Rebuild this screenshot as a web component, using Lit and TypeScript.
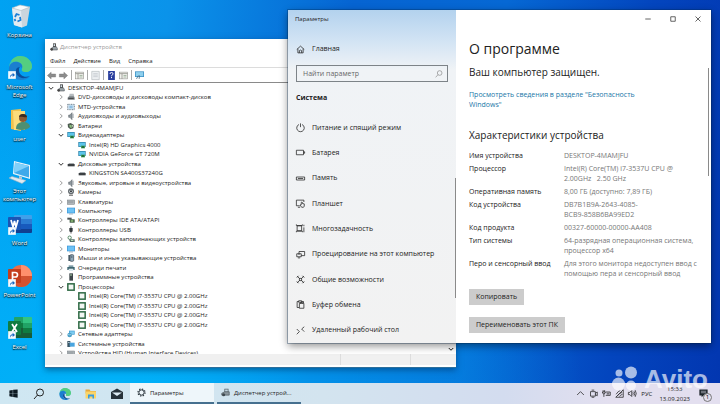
import { LitElement, html, svg, css, nothing, SVGTemplateResult } from "lit";
import { customElement } from "lit/decorators.js";

const glyphs: Record<string, SVGTemplateResult> = {
  // desktop
  bin: svg`<path d="M4 4l2 17 8 2.500 5-2L22 3z" fill="#c9d5dd"/><path d="M4 4l2 17 8 2.500L13 6z" fill="#e3ebf0"/><path d="M4 4l8-3 10 2-9 3.500z" fill="#f7fafb" stroke="#a9b7c0" stroke-width=".6"/><path d="M7 13l1.500-3 3 1m.5 2 .5 3-3 1.500m-2-.5-1-2" fill="none" stroke="#1c7fd6" stroke-width="1.800"/>`,
  edge: svg`<path d="M1 12C1 5 6 0 12 0c7 0 12 5 12 10 0 4-3 6-6 6-3 0-5-1-4-3 1-3-1-5-4-5-4 0-8 2-9 6z" fill="#37c3b5"/><path d="M12 0c7 0 12 5 12 10 0 4-3 6-6 6-3 0-5-1-4-3 2-4-2-9-9-7l-2-1c2-3 5-5 9-5z" fill="#5fd16f" opacity=".75"/><path d="M1 11c1-4 5-6 9-5 3 1 5 3 4 6-2-2-5-1-6 2-1 5 4 9 9 8 2 0 3-1 5-2-2 3-6 4-9 4C5 24 0 18 1 11z" fill="#1b7fd0"/><path d="M8 14c-1 5 4 9 9 8 2 0 3-1 5-2-5 2-11 0-11-6 0-1 0-2 1-3-2 0-4 1-4 3z" fill="#0c4f9c"/>`,
  user: svg`<path d="M3 2 13 1v22L3 21z" fill="#f0c14d"/><path d="M5 3h12v19H6z" fill="#fbdc7c"/><circle cx="15" cy="10" r="4" fill="#8a5a34"/><path d="M11 9c0-4 8-4 8 0-2 1-5-1-8 0z" fill="#3b2a20"/><path d="M8 21c0-5 3-7 7-7s7 2 7 5c-3 3-8 4-14 2z" fill="#4d8f72"/>`,
  pc: svg`<path d="M6 1l16 4v14L5 14z" fill="#e8f4fb"/><path d="M7 2.500l14 3.500v11.500L6 13z" fill="#3fa9ea"/><path d="M7 2.500l14 3.500L6 13z" fill="#7fd0fa"/><path d="M11 16l3 1v2h-3z" fill="#b9cad6"/><path d="M1 18l3-1.500 14 4-4 3z" fill="#dfeaf1" stroke="#9bb0be" stroke-width=".6"/>`,
  word: svg`<rect x="6" y="3" width="18" height="5" rx="1" fill="#3fa0ea"/><path d="M6 7h18v5H6z" fill="#2b7cd3"/><path d="M6 12h18v5H6z" fill="#185abd"/><path d="M6 17h18v3q0 1-1 1H7q-1 0-1-1z" fill="#103f91"/><rect y="5" width="13" height="13" rx="1" fill="#1a55b4"/><path d="M3 8l2 7 1.500-6L8 15l2-7" fill="none" stroke="#fff" stroke-width="1.700"/>`,
  ppt: svg`<circle cx="13" cy="12" r="11" fill="#ed6c47"/><path d="M13 1a11 11 0 0 1 11 11H13z" fill="#ff8f6b"/><path d="M2 12h22a11 11 0 0 1-22 0z" fill="#d35230"/><rect y="5" width="13" height="14" rx="1" fill="#c43e1c"/><path d="M4.500 16V8.500h2.500q2.500 0 2.500 2.300T7 13H5" fill="none" stroke="#fff" stroke-width="1.700"/>`,
  excel: svg`<path d="M6 2q0-1 1-1h8v6H6z" fill="#21a366"/><path d="M15 1h8q1 0 1 1v5h-9z" fill="#33c481"/><path d="M6 7h9v5H6z" fill="#107c41"/><path d="M15 7h9v5h-9z" fill="#21a366"/><path d="M6 12h18v10H7q-1 0-1-1z" fill="#185c37"/><path d="M15 12h9v5h-9z" fill="#107c41"/><rect y="5" width="13" height="14" rx="1" fill="#107c41"/><path d="M4 8l5 8m0-8-5 8" stroke="#fff" stroke-width="1.700"/>`,
  shortcut: svg`<rect x=".5" y=".5" width="23" height="23" fill="#f4f9fd"/><path d="M6 20q0-10 8-10V5l7 7-7 6v-5q-5 0-8 7z" fill="#1667c0"/>`,
  // device manager
  host: svg`<path d="M9 1h9v11H9z" fill="#555"/><path d="M4 16 9 11h10l3 5v5H4z" fill="#9aa3a8" stroke="#3c4347" stroke-width="1.500"/><path d="M11 4h4v5h-4z" fill="#d5e4ee"/><circle cx="5" cy="19" r="4" fill="#444"/>`,
  dvd: svg`<path d="M8 2h12l2 9H6z" fill="#b6bcc0"/><path d="M2 14 6 10h14l3 4v6H2z" fill="#777e82"/><path d="M4 16h16v2H4z" fill="#333"/>`,
  mtd: svg`<rect x="2" y="4" width="20" height="16" fill="#cfe4f4" stroke="#41525e" stroke-width="2" stroke-dasharray="3 2"/><path d="M7 8h10v8H7z" fill="#8fbfe2"/>`,
  audio: svg`<path d="M5 9h4l6-7v21l-6-7H5z" fill="#8d979d" stroke="#525b61" stroke-width="1.500"/><path d="M18 5v13" stroke="#5e6b73" stroke-width="2"/>`,
  battery: svg`<path d="M2 6l9-3 10 6-2 10-9 3-7-6z" fill="#4d5a50"/><path d="M7 8l7 2v9l-6-3z" fill="#8bc27f"/><path d="M14 8l6 3-3 5z" fill="#d7dfcf"/>`,
  display: svg`<rect x="1" y="3" width="22" height="15" fill="#2a7fa8"/><path d="M3 5h18v11H3z" fill="#5cc4ea"/><path d="M9 14h12v8H9z" fill="#3d9b57"/><path d="M12 16h6v4h-6z" fill="#1e5c37"/>`,
  disk: svg`<rect x="2" y="12" width="21" height="7" fill="#3b3f42"/><path d="M4 12l2-2h14l2 2z" fill="#8b9296"/>`,
  camera: svg`<circle cx="12" cy="10" r="9" fill="#62696d"/><circle cx="12" cy="10" r="5" fill="#d3d9dc"/><circle cx="12" cy="10" r="3" fill="#2e3336"/><path d="M6 20h12v3H6z" fill="#555"/>`,
  keyboard: svg`<rect x="1" y="6" width="22" height="13" fill="#b3babe" stroke="#71797e" stroke-width="1.500"/><path d="M4 10h16M4 14h16" stroke="#687075" stroke-width="1.500" stroke-dasharray="2 1"/>`,
  computer: svg`<rect x="0" y="2" width="24" height="17" fill="#3c96d8"/><path d="M2 4h20v13H2z" fill="#6cc2f5"/><path d="M6 20h12v2H6z" fill="#8499a6"/>`,
  ide: svg`<path d="M1 5h13v6H1z" fill="#4c5357"/><path d="M8 10h15v10H8z" fill="#35523a"/><path d="M11 13h8v4h-8z" fill="#9fd184"/>`,
  usb: svg`<path d="M9 1h6v5H9z" fill="#a5adb2"/><path d="M7 6h10v9q0 3-5 4-5-1-5-4z" fill="#33393d"/><path d="M12 18v5" stroke="#333" stroke-width="2"/>`,
  storage: svg`<circle cx="8" cy="8" r="5" fill="none" stroke="#3d7a50" stroke-width="2.500"/><path d="M6 13h17v8H9z" fill="#55706a"/><path d="M12 15h7v3h-7z" fill="#b7dcb9"/>`,
  mouse: svg`<rect x="4" y="3" width="8" height="18" fill="#52646f"/><rect x="9" y="2" width="11" height="20" rx="3" fill="#8fa9bb" stroke="#34414a" stroke-width="2"/><path d="M14.500 5v7" stroke="#34414a" stroke-width="2"/>`,
  printer: svg`<path d="M5 4h14v5H5z" fill="#7d9ba6"/><path d="M1 9h22v9h-4v-4H5v4H1z" fill="#3c6570"/><path d="M6 15h12v6H6z" fill="#dcebf0"/>`,
  software: svg`<rect x="7" y="1" width="11" height="22" fill="#3e464a"/><path d="M9 4h6v4H9z" fill="#87a78b"/>`,
  cpu: svg`<rect x="2.500" y="2.500" width="19" height="19" fill="#f2f7f3" stroke="#2f6a45" stroke-width="4.500"/>`,
  network: svg`<rect x="6" y="2" width="17" height="12" fill="#3c9bd2"/><path d="M8 4h13v8H8z" fill="#7ccbf0"/><circle cx="8" cy="15" r="7" fill="#4aa0c8"/><path d="M3 13q5 3 10 0" stroke="#d6f0fa" fill="none" stroke-width="1.500"/>`,
  system: svg`<path d="M1 3h9v18H1z" fill="#3c5665"/><path d="M8 8h15v12H8z" fill="#4aa5df"/><path d="M3 6h5v2H3z" fill="#cfe0ea"/>`,
  // toolbar
  back: svg`<path d="M1 12 11 3v5h12v8H11v5z" fill="#8c8c8c" stroke="#6e6e6e"/>`,
  forward: svg`<path d="M23 12 13 3v5H1v8h12v5z" fill="#8c8c8c" stroke="#6e6e6e"/>`,
  panel: svg`<rect x="1" y="3" width="22" height="18" fill="#f2f2ee" stroke="#8b8b85" stroke-width="1.500"/><path d="M1 7h22M8 7v14" stroke="#8b8b85" stroke-width="2"/><path d="M12 12h8m-8 4h8" stroke="#8ea58e" stroke-width="2"/>`,
  sheet: svg`<path d="M2 1h20v22H2z" fill="#eceff1" stroke="#a9b0b5" stroke-width="1.500"/><path d="M6 7h12M6 11h12M6 15h12" stroke="#b5bcc2" stroke-width="1.500"/>`,
  help: svg`<rect x="3" y="0" width="18" height="24" fill="#2b3f9e"/><path d="M8 8q0-4 4-4t4 3.500q0 2-2 3t-2 3.500m0 2v3" fill="none" stroke="#fff" stroke-width="2.500"/>`,
  scan: svg`<path d="M0 1h24v15H0z" fill="#3a8fc4"/><path d="M2 3h20v11H2z" fill="#8fd0ee"/><path d="M9 12l-5 9m8-9-1 9" stroke="#375f7a" stroke-width="2"/>`,
  // settings
  home: svg`<path d="M2 12 12 3l10 9M5 10v11h14V10M9 21v-6q3-3 6 0v6"/>`,
  search: svg`<circle cx="14" cy="9" r="7"/><path d="M9 14 2 22"/>`,
  power: svg`<path d="M8 4a10 10 0 1 0 8 0M12 1v10"/>`,
  cell: svg`<path d="M1 6h19v12H1zM20 10h3v4h-3"/>`,
  memory: svg`<path d="M1 8h22v8H1zM5 12h14"/>`,
  tablet: svg`<path d="M10 18H1V3h20v5M5 22h6M14 15V9q2-2 3 0v3l5 1v6l-2 3h-5l-4-6q1-2 3-1"/>`,
  tasks: svg`<path d="M3 5h12v13H3zM1 1v3m16-3v3M1 19v3m16-3v3M1 4h16M1 19h16M21 2v4m0 3v13"/>`,
  project: svg`<path d="M8 13V4h15v11h-9M2 10h12v8H2zM5 21h6"/>`,
  shared: svg`<path d="M3 3l7 7M21 3l-7 7M3 21l7-7M21 21l-7-7M2 7l5-5M22 7l-5-5M2 17l5 5M22 17l-5 5M9 9h6v6H9z"/>`,
  clipboard: svg`<path d="M8 20H3V4h4m8 0h5v4M7 2h8v4H7zM9 9h12v13H9zM12 9V7h6v2"/>`,
  remote: svg`<path d="M2 8l7 7-7 7M22 2l-7 6 7 7"/>`,
  // taskbar
  start: svg`<path d="M1 4l9-1.500V11H1zM11 2.300 23 1v10H11zM1 12h9v9L1 19.500zM11 12h12v11l-12-1.500z" fill="#0d1a22"/>`,
  explorer: svg`<path d="M1 3h8l2 3h11v5H1z" fill="#e8a83a"/><path d="M1 7h21v14H1z" fill="#fbd568"/><path d="M6 13h12v8h-3v-4H9v4H6z" fill="#3a9be0"/>`,
  mail: svg`<path d="M0 8 12 1l12 7v14H0z" fill="#26323a"/><path d="M2 9h20l-10 7z" fill="#dcebf3"/>`,
  gear: svg`<circle cx="12" cy="12" r="7" fill="none" stroke="#222c33" stroke-width="2.500"/><circle cx="12" cy="12" r="9.500" fill="none" stroke="#222c33" stroke-width="3" stroke-dasharray="3.700 3.760"/>`,
  manager: svg`<path d="M9 2h11v10H9z" fill="#59666e"/><path d="M11 4h7v6h-7z" fill="#c4d7e2"/><path d="M2 14l8-4h12v9H2z" fill="#8b979e" stroke="#39444a" stroke-width="1.500"/><circle cx="7" cy="18" r="4" fill="#3f494f"/>`,
  up: svg`<path d="M3 16l9-9 9 9"/>`,
  down: svg`<path d="M3 8l9 9 9-9"/>`,
  right: svg`<path d="M8 3l9 9-9 9"/>`,
  meet: svg`<path d="M4 7h13v12H4zM17 11l5-3v10l-5-3M7 3h7M7 22h7"/>`,
  charge: svg`<path d="M10 8h12v9H10M3 3v5m4-5v5M1 8h8q0 5-4 5t-4-5M5 13v8M14 10v5m4-5v5"/>`,
  wifi: svg`<path d="M2 22 22 2v20zM3 14Q8 6 14 4M7 18q4-7 12-9M12 20q2-4 8-6"/>`,
  volume: svg`<path d="M1 9h4l5-5v16l-5-5H1zM13 9q2 3 0 6M16 6q4 6 0 12M19 3q6 9 0 18"/>`,
  note: svg`<path d="M1 1h22v16H12l-5 5v-5H1z" fill="#1f262c"/><path d="M5 6h14M5 10h14" stroke="#dcdcec" stroke-width="1.500"/>`,
  min: svg`<path d="M1 12h22"/>`,
  max: svg`<path d="M3 3h18v18H3z"/>`,
  close: svg`<path d="M2 2l20 20M22 2 2 22"/>`,
};

const icon = (name: string, cls = "i8") =>
  html`<svg class="icon ${cls}" viewBox="0 0 24 24" aria-hidden="true">${glyphs[name]}</svg>`;

const shared = css`
  :host { box-sizing: border-box; font-family: "Open Sans", "Noto Sans", sans-serif; }
  *, *::before, *::after { box-sizing: border-box; }
  button, input { font: inherit; color: inherit; border: 0; padding: 0; background: none; margin: 0; }
  a { color: inherit; text-decoration: none; }
  ul { list-style: none; margin: 0; padding: 0; }
  h1, h2, h3, p { margin: 0; }
  .icon { display: block; flex: none; overflow: visible; }
  .i6 { width: 6px; height: 6px; }
  .i8 { width: 8px; height: 8px; }
  .i9 { width: 9px; height: 9px; }
  .i12 { width: 12px; height: 12px; }
  .i24 { width: 24px; height: 24px; }
  .line { fill: none; stroke: currentColor; stroke-width: 2; }
  .semi { stroke-width: 3; }
  .bold { stroke-width: 4; }
`;

type Node = { label: string; icon: string; level: 0 | 1 | 2; open?: boolean };
const n = (label: string, icon: string, level: 0 | 1 | 2 = 1, open = false): Node => ({ label, icon, level, open });
const core = "Intel(R) Core(TM) i7-3537U CPU @ 2.00GHz";
const tree: Node[] = [
  n("DESKTOP-4MAMJFU", "host", 0, true),
  n("DVD-дисководы и дисководы компакт-дисков", "dvd"),
  n("MTD-устройства", "mtd"),
  n("Аудиовходы и аудиовыходы", "audio"),
  n("Батареи", "battery"),
  n("Видеоадаптеры", "display", 1, true),
  n("Intel(R) HD Graphics 4000", "display", 2),
  n("NVIDIA GeForce GT 720M", "display", 2),
  n("Дисковые устройства", "disk", 1, true),
  n("KINGSTON SA400S37240G", "disk", 2),
  n("Звуковые, игровые и видеоустройства", "audio"),
  n("Камеры", "camera"),
  n("Клавиатуры", "keyboard"),
  n("Компьютер", "computer"),
  n("Контроллеры IDE ATA/ATAPI", "ide"),
  n("Контроллеры USB", "usb"),
  n("Контроллеры запоминающих устройств", "storage"),
  n("Мониторы", "computer"),
  n("Мыши и иные указывающие устройства", "mouse"),
  n("Очереди печати", "printer"),
  n("Программные устройства", "software"),
  n("Процессоры", "cpu", 1, true),
  n(core, "cpu", 2), n(core, "cpu", 2), n(core, "cpu", 2), n(core, "cpu", 2),
  n("Сетевые адаптеры", "network"),
  n("Системные устройства", "system"),
  n("Устройства HID (Human Interface Devices)", "keyboard"),
];

@customElement("device-manager")
export class DeviceManager extends LitElement {
  static styles = [shared, css`
    :host { display: flex; flex-direction: column; background: #fff; color: #1a1a1a; font-size: 6px; line-height: 8px; box-shadow: 0 2px 6px #00285080; border-bottom: 1px solid #2c6f9c; }
    .title { display: flex; align-items: center; gap: 2px; height: 16px; padding: 0 5px; color: #999; }
    .menu { display: flex; align-items: center; gap: 8px; height: 12px; padding: 0 5px; }
    .tools { display: flex; align-items: center; gap: 3px; height: 16px; padding: 0 2px; border-top: 1px solid #dcdcdc; border-bottom: 1px solid #8a8a8a; }
    .sep { width: 1px; height: 10px; background: #aaa; }
    .view { flex: 1; min-height: 0; display: flex; overflow: hidden; }
    .tree { flex: 1; display: grid; grid-auto-rows: 1fr; height: 275px; }
    .node { display: flex; align-items: center; gap: 3px; white-space: nowrap; padding-left: 3px; }
    .l1 { padding-left: 13px; }
    .l2 { padding-left: 33px; }
    .toggle { width: 6px; height: 6px; color: #333; }
    .closed { color: #999; }
    .bar { width: 11px; display: flex; align-items: flex-end; padding: 0 3px 2px; }
    .status { display: flex; height: 13px; background: #f0f0f0; border-bottom: 2px solid #fff; }
    .cell { width: 70px; border-left: 1px solid #ddd; }
    .cell.first { flex: 1; border: 0; }
    .cell.last { width: 46px; }
  `];

  render() {
    return html`
      <div class="title">${icon("host")}<span>Диспетчер устройств</span></div>
      <div class="menu">${["Файл", "Действие", "Вид", "Справка"].map((m) => html`<button>${m}</button>`)}</div>
      <div class="tools">
        ${["back", "forward", "|", "panel", "|", "sheet", "|", "help", "panel", "|", "scan"].map((t) =>
          t === "|" ? html`<span class="sep"></span>` : html`<button aria-label=${t}>${icon(t, "i9")}</button>`)}
      </div>
      <div class="view">
        <ul class="tree">
          ${tree.map((t) => html`<li class="node l${t.level}">
            ${t.level < 2
              ? html`<button class="toggle ${t.open ? "" : "closed"}" aria-label="toggle">${icon(t.open ? "down" : "right", "i6 line bold")}</button>`
              : nothing}
            ${icon(t.icon)}<span>${t.label}</span></li>`)}
        </ul>
        <div class="bar">${icon("down", "i6 line bold")}</div>
      </div>
      <div class="status"><span class="cell first"></span><span class="cell"></span><span class="cell last"></span></div>`;
  }
}

const sections: [string, string][] = [
  ["power", "Питание и спящий режим"],
  ["cell", "Батарея"],
  ["memory", "Память"],
  ["tablet", "Планшет"],
  ["tasks", "Многозадачность"],
  ["project", "Проецирование на этот компьютер"],
  ["shared", "Общие возможности"],
  ["clipboard", "Буфер обмена"],
  ["remote", "Удаленный рабочий стол"],
];

const specs: [string, string][] = [
  ["Имя устройства", "DESKTOP-4MAMJFU"],
  ["Процессор", "Intel(R) Core(TM) i7-3537U CPU @\n2.00GHz   2.50 GHz"],
  ["Оперативная память", "8,00 ГБ (доступно: 7,89 ГБ)"],
  ["Код устройства", "DB7B1B9A-2643-4085-\nBCB9-858B6BA99ED2"],
  ["Код продукта", "00327-60000-00000-AA408"],
  ["Тип системы", "64-разрядная операционная система,\nпроцессор x64"],
  ["Перо и сенсорный ввод", "Для этого монитора недоступен ввод с\nпомощью пера и сенсорный ввод"],
];

@customElement("settings-window")
export class SettingsWindow extends LitElement {
  static styles = [shared, css`
    :host { display: flex; background: #fff; color: #222; font-size: 7px; line-height: 10px; box-shadow: 0 3px 8px #00000070, 0 0 0 1px #00306050; }
    .side { position: relative; width: 168px; flex: none; display: flex; flex-direction: column; background: linear-gradient(#b3d2ee, #d3e4f4 32px, #f0f3f6 60px, #f2f2f2); }
    .title { font-size: 6px; line-height: 18px; padding: 0 7px; }
    .link { display: flex; align-items: center; gap: 7px; padding: 0 8px; white-space: nowrap; }
    .home { height: 20px; margin-top: 11px; }
    .search { display: flex; align-items: center; height: 17px; margin: 6px 8px 0; padding: 0 4px 0 6px; border: 1px solid #7d8388; }
    .search input { flex: 1; min-width: 0; outline: 0; }
    .search input::placeholder { color: #666; opacity: 1; }
    .search .icon { color: #888; }
    .group { font-size: 7px; font-weight: 700; padding: 11px 8px 12px; }
    .nav { flex: 1; display: grid; grid-auto-rows: 1fr; }
    .thumb { position: absolute; right: 0; width: 1px; background: #8a8a8a; }
    .side .thumb { top: 168px; bottom: 45px; }
    .main { position: relative; flex: 1; min-width: 0; padding: 0 8px 0 13px; }
    .main .thumb { right: 2px; top: 58px; height: 108px; }
    .caption { display: flex; justify-content: flex-end; gap: 19px; height: 18px; padding-right: 2px; align-items: center; color: #333; }
    h1 { font-size: 14px; font-weight: 400; line-height: 20px; margin-top: 11px; }
    .ok { font-size: 10px; font-weight: 500; line-height: 14px; margin-top: 6px; }
    .more { display: block; color: #1a77a8; margin-top: 11px; white-space: pre-line; }
    h2 { font-size: 10px; font-weight: 400; line-height: 14px; margin-top: 18px; }
    table { border-collapse: collapse; margin-top: 9px; }
    th, td { padding: 0 0 3px; text-align: left; vertical-align: top; font-weight: 400; white-space: pre; }
    th { width: 95px; }
    td { color: #777; }
    .btn { display: block; height: 16px; padding: 0 7px; background: #ccc; }
    .copy { margin: 7px 0 12px; }
  `];

  render() {
    return html`
      <nav class="side">
        <div class="title">Параметры</div>
        <a class="link home" href="#">${icon("home", "i9 line")}<span>Главная</span></a>
        <label class="search"><input type="text" placeholder="Найти параметр" aria-label="Найти параметр" />${icon("search", "i8 line")}</label>
        <h3 class="group">Система</h3>
        <div class="nav">
          ${sections.map(([i, t]) => html`<a class="link" href="#">${icon(i, "i9 line")}<span>${t}</span></a>`)}
        </div>
        <span class="thumb"></span>
      </nav>
      <section class="main">
        <div class="caption">${["min", "max", "close"].map((c) => html`<button aria-label=${c}>${icon(c, "i6 line semi")}</button>`)}</div>
        <h1>О программе</h1>
        <p class="ok">Ваш компьютер защищен.</p>
        <a class="more" href="#">Просмотреть сведения в разделе "Безопасность
Windows"</a>
        <h2>Характеристики устройства</h2>
        <table>${specs.map(([k, v]) => html`<tr><th scope="row">${k}</th><td>${v}</td></tr>`)}</table>
        <button class="btn copy">Копировать</button>
        <button class="btn">Переименовать этот ПК</button>
        <span class="thumb"></span>
      </section>`;
  }
}

@customElement("task-bar")
export class TaskBar extends LitElement {
  static styles = [shared, css`
    :host { display: flex; align-items: stretch; height: 21px; color: #222; font-size: 6px; line-height: 10px; white-space: nowrap; background: linear-gradient(90deg, #cfe7f2, #d3e4ef 45%, #d3dcef 70%, #e3dfef 85%); }
    .pins { display: flex; width: 130px; }
    .pins button { flex: 1; display: grid; place-items: center; }
    .app { display: flex; align-items: center; gap: 4px; width: 84px; padding: 0 7px; margin-right: 3px; border-bottom: 2px solid #46708f; }
    .app.idle { padding: 0 4px; }
    .active { background: #eef6fa; }
    .tray { display: flex; align-items: center; gap: 4px; margin-left: auto; padding-right: 12px; }
    .clock { text-align: center; margin: 0 5px 0 3px; }
  `];

  render() {
    return html`
      <div class="pins">
        ${["start", "search", "edge", "explorer", "mail"].map((p) =>
          html`<button aria-label=${p}>${icon(p, p === "start" ? "i9" : p === "search" ? "i12 line" : "i12")}</button>`)}
      </div>
      <button class="app active">${icon("gear", "i9")}<span>Параметры</span></button>
      <button class="app idle">${icon("manager", "i9")}<span>Диспетчер устрой...</span></button>
      <div class="tray">
        ${["up", "meet", "charge", "wifi", "volume"].map((t) => icon(t, "i9 line"))}
        <span>РУС</span>
        <time class="clock">15:33<br />13.09.2023</time>
        ${icon("note", "i9")}
      </div>`;
  }
}

const shortcuts: [string, string, boolean][] = [
  ["bin", "Корзина", false],
  ["edge", "Microsoft\nEdge", true],
  ["user", "user", false],
  ["pc", "Этот\nкомпьютер", false],
  ["word", "Word", true],
  ["ppt", "PowerPoint", true],
  ["excel", "Excel", true],
];

@customElement("app-root")
export class AppRoot extends LitElement {
  static styles = [shared, css`
    :host { display: flex; flex-direction: column; min-height: 100vh; position: relative; overflow: hidden;
      background: radial-gradient(ellipse at 15% 100%, #00b4fa, #00b4fa00 55%), linear-gradient(97deg, #00a2f2, #0a93ea 22%, #0664d2 46%, #0668d4 66%, #0345be 85%, #0236b0); }
    .desk { flex: 1; }
    .icons { width: 39px; }
    .item { display: flex; flex-direction: column; align-items: center; gap: 3px; height: 52px; padding-top: 4px; color: #fff; font-size: 6px; line-height: 8px; text-align: center; white-space: pre; text-shadow: 0 1px 1px #000, 0 0 2px #000c; }
    .pic { position: relative; }
    .mark { position: absolute; left: 0; bottom: 1px; }
    .dm { position: absolute; left: 45px; top: 39px; right: 264px; bottom: 36px; }
    .settings { position: absolute; left: 40%; top: 10px; right: 9px; bottom: 61px; }
    .watermark { position: absolute; right: 12px; bottom: 10px; display: flex; align-items: center; gap: 4px; color: #fff; opacity: .65; font-size: 26px; line-height: 30px; font-weight: 700; font-family: "Liberation Sans", sans-serif; }
    .dots { width: 28px; height: 26px; }
    .count { position: absolute; right: 8px; bottom: 2px; width: 9px; height: 9px; border: 1px solid #777; border-radius: 50%; background: #e3dfef; font-size: 6px; line-height: 7px; text-align: center; }
  `];

  render() {
    return html`
      <main class="desk">
        <div class="icons">
          ${shortcuts.map(([i, t, linked]) => html`<a class="item" href="#"><span class="pic">${icon(i, "i24")}${linked ? html`<span class="mark">${icon("shortcut", "i8")}</span>` : nothing}</span><span>${t}</span></a>`)}
        </div>
      </main>
      <device-manager class="dm"></device-manager>
      <settings-window class="settings"></settings-window>
      <task-bar></task-bar>
      <span class="count">1</span>
      <div class="watermark">
        <svg class="dots" viewBox="0 0 28 26" fill="#fff" aria-hidden="true"><circle cx="7" cy="7" r="3.500"/><circle cx="19" cy="6.500" r="6"/><circle cx="6.500" cy="18" r="6.500"/><circle cx="19" cy="19.500" r="5"/></svg>
        <span>Avito</span>
      </div>`;
  }
}
